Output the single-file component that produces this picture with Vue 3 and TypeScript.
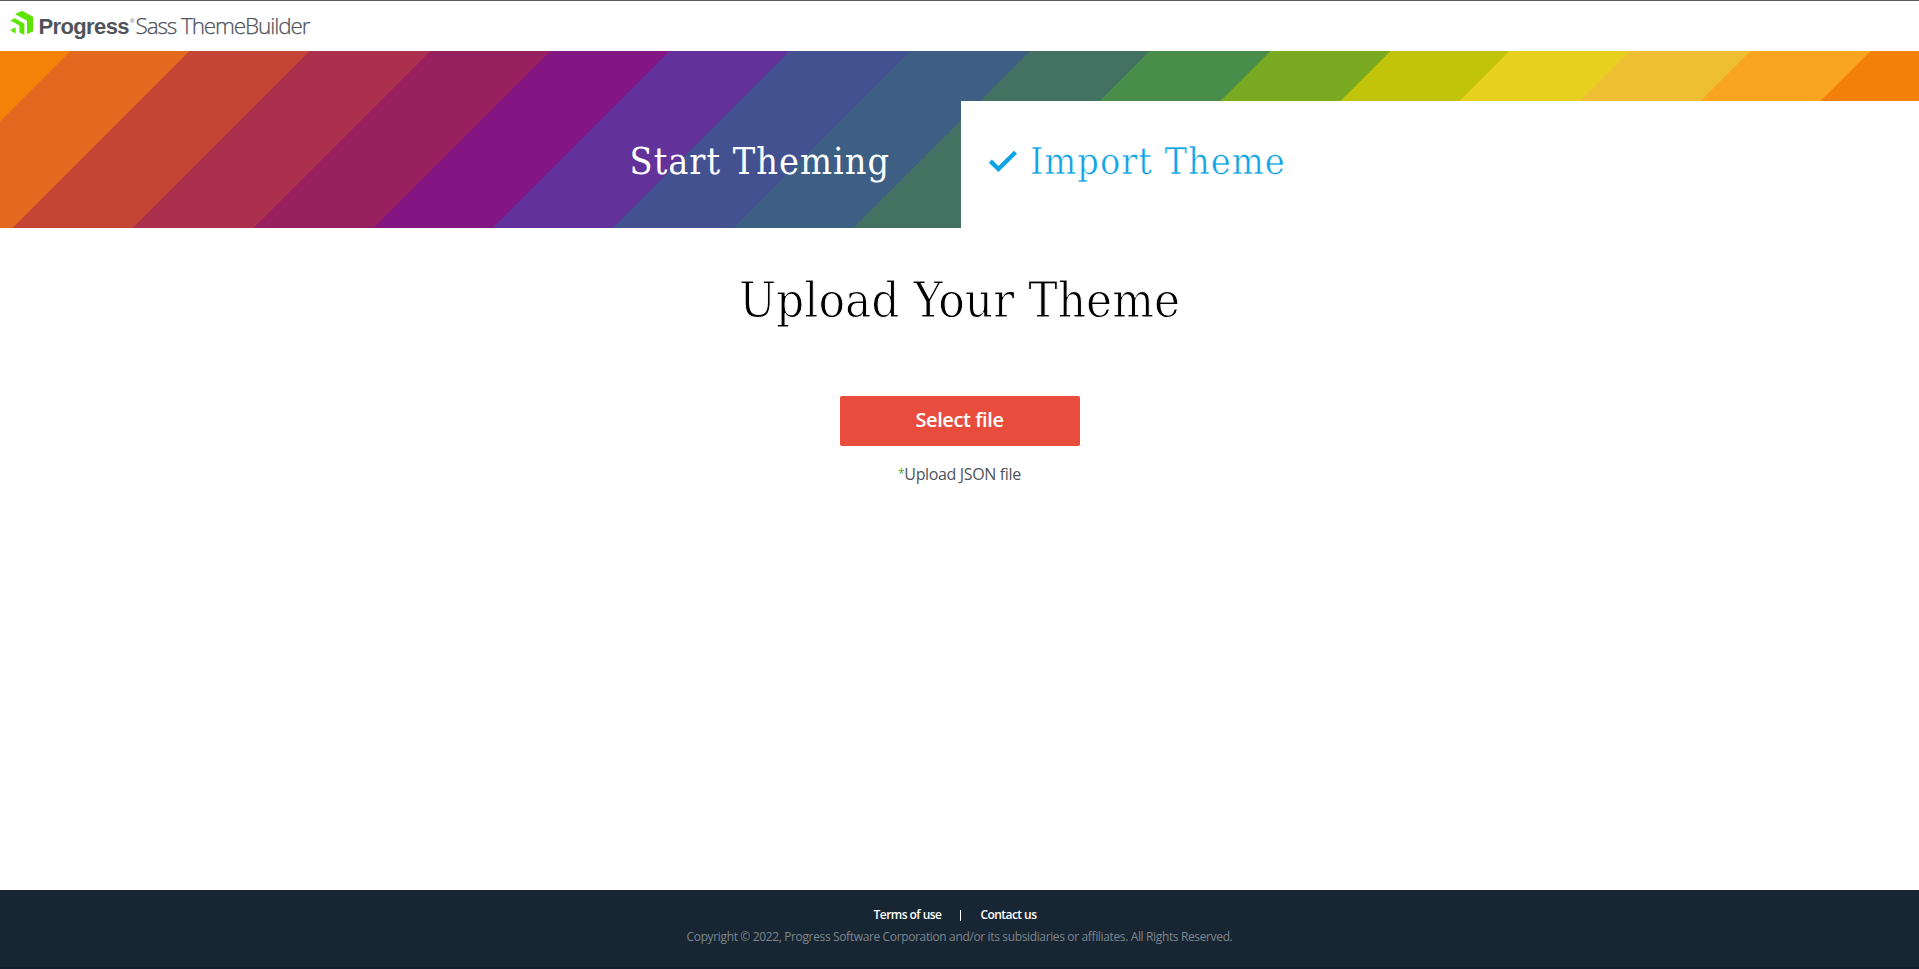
<script setup lang="ts">
const footerLinks: string[] = ['Terms of use', 'Contact us']
</script>

<template>
  <div class="page">
    <header class="header">
      <svg class="brand" width="330" height="50" viewBox="0 0 330 50" role="img">
        <g fill="#5ce500">
          <path d="M15 14 22 10.7 33 16.8V31.2L27 34.3V20.7Z" />
          <path d="M10.4 20.6 14.7 18.2 24.4 23.7V35L19.4 32.4V25.6Z" />
          <path d="M10.2 30.3 15.6 27.2V33.4Z" />
        </g>
        <text class="brand-name" x="38.5" y="34" textLength="91">Progress</text>
        <text class="brand-mark" x="130" y="23">®</text>
        <text class="brand-product" x="135.5" y="34" textLength="175">Sass ThemeBuilder</text>
      </svg>
    </header>

    <nav class="tabs">
      <a class="tab start"><span class="start-label">Start Theming</span></a>
      <a class="tab import">
        <svg class="check" width="30" height="23" viewBox="0 0 30 23"><path d="M2.3 11.2 10.4 19 27.5 2.3" fill="none" stroke="#0ea3e4" stroke-width="4.4" /></svg>
        <span class="import-label">Import Theme</span>
      </a>
    </nav>

    <main class="content">
      <h1>Upload Your Theme</h1>
      <button type="button">Select file</button>
      <p><span class="star">*</span>Upload JSON file</p>
    </main>

    <footer class="footer">
      <ul>
        <li v-for="link in footerLinks" :key="link">{{ link }}</li>
      </ul>
      <div class="copyright">Copyright © 2022, Progress Software Corporation and/or its subsidiaries or affiliates. All Rights Reserved.</div>
    </footer>
  </div>
</template>

<style>
body { background: #fff; }
</style>

<style scoped>
.page {
  display: flex;
  flex-direction: column;
  height: 100vh;
  box-sizing: border-box;
  border-top: 1px solid #5b5b63;
  font-family: "Open Sans", sans-serif;
  overflow: hidden;
}
.header { height: 50px; flex: none; }
.brand { display: block; margin-top: -1px; }
.brand-name { font: 700 22px "Liberation Sans", sans-serif; fill: #50535a; }
.brand-mark { font: 6px "Liberation Sans", sans-serif; fill: #50535a; }
.brand-product { font: 300 22.5px "Open Sans", sans-serif; fill: #50535a; stroke: #50535a; stroke-width: 0.25px; }
.tabs {
  flex: none;
  display: flex;
  align-items: flex-end;
  height: 177px;
  background: linear-gradient(135deg,
    #f58208 49.5px, #e4681f 49.5px 134.35px, #c44536 134.35px 219.2px, #aa304e 219.2px 304.06px,
    #98205f 304.06px 388.91px, #831682 388.91px 473.76px, #63319a 473.76px 558.61px,
    #435190 558.61px 643.47px, #3d5f84 643.47px 728.32px, #447262 728.32px 813.17px,
    #488e4a 813.17px 898.03px, #79aa22 898.03px 982.88px, #c2c40b 982.88px 1067.73px,
    #e7d020 1067.73px 1152.58px, #eebf30 1152.58px 1237.44px, #f9a51f 1237.44px 1322.29px,
    #f38008 1322.29px);
}
.tab {
  box-sizing: border-box;
  height: 127px;
  display: flex;
  align-items: center;
  padding-bottom: 7px;
  font-family: "DejaVu Serif Condensed", "DejaVu Serif", serif;
  font-stretch: condensed;
  font-size: 37.5px;
  line-height: 48px;
  letter-spacing: 1px;
  white-space: nowrap;
}
.start { width: 961px; justify-content: flex-end; padding-right: 71px; color: #fff; }
.import { flex: 1; background: #fff; color: #0ea3e4; padding-left: 27px; }
.check { margin-right: 12px; }
.import-label { -webkit-text-stroke: 0.5px #fff; }
.content { flex: 1; display: flex; flex-direction: column; align-items: center; }
h1 {
  margin: 40px 0 0;
  font: 400 49px/66px "DejaVu Serif Condensed", "DejaVu Serif", serif;
  font-stretch: condensed;
  color: #000;
  -webkit-text-stroke: 0.9px #fff;
}
button {
  margin-top: 62px;
  width: 240px;
  height: 50px;
  border: 0;
  border-radius: 2px;
  background: #e84c3d;
  color: #fff;
  font: 600 20px/48px "Open Sans", sans-serif;
  letter-spacing: -0.4px;
  padding: 0 0 2px;
}
p { margin: 17px 0 0; font-size: 16px; line-height: 22px; letter-spacing: -0.35px; color: #50535a; }
.star { color: #3dae2b; font-size: 12px; line-height: 1; position: relative; top: -2px; }
.footer {
  flex: none;
  height: 79px;
  box-sizing: border-box;
  padding-top: 15px;
  background: #182532;
  border-bottom: 2px solid #131f2f;
  text-align: center;
}
ul { display: flex; justify-content: center; margin: 0; padding: 0 9px 0 0; list-style: none; }
li { font-size: 12px; line-height: 20px; font-weight: 600; letter-spacing: -0.55px; color: #fff; }
li + li { margin-left: 19px; padding-left: 20px; position: relative; }
li + li::before { content: ""; position: absolute; left: 0; top: 5px; width: 1px; height: 11px; background: #fff; }
.copyright { margin-top: 2px; font-size: 12px; line-height: 20px; letter-spacing: -0.36px; color: #7d858e; }
</style>
